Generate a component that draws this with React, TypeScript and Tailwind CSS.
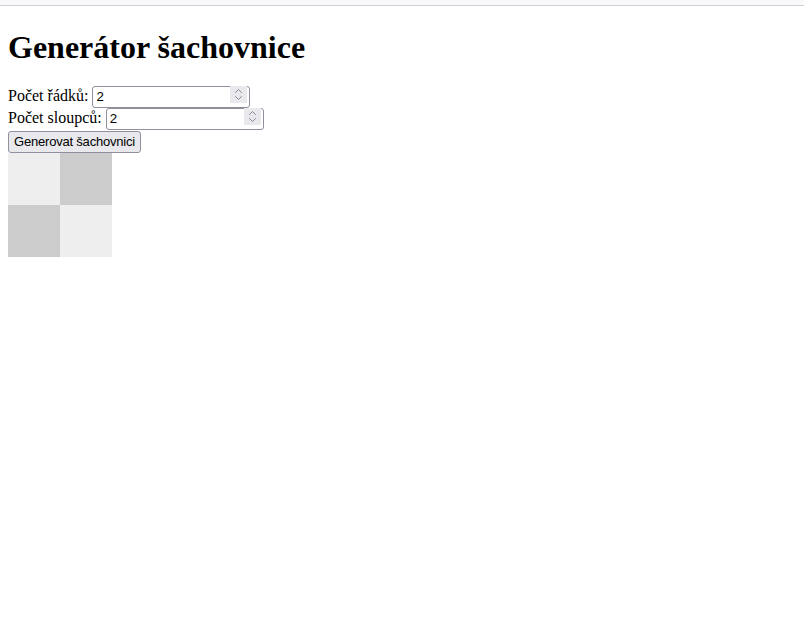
import { useState } from 'react';

const Spinner = () => (
  <div className="absolute right-[3px] top-[2px] flex h-[17px] w-[17px] flex-col items-center justify-center bg-[#e9e9ed]">
    <svg width="9" height="13" viewBox="0 0 9 13" fill="none" stroke="#8a8a94" strokeWidth="1" strokeLinecap="round">
      <path d="M1.5 4.5 L4.5 1.5 L7.5 4.5" />
      <path d="M1.5 8.5 L4.5 11.5 L7.5 8.5" />
    </svg>
  </div>
);

const NumberField = ({ value, onChange }: { value: string; onChange: (v: string) => void }) => (
  <span className="relative inline-block align-middle">
    <input
      type="text"
      value={value}
      onChange={(e) => onChange(e.target.value)}
      className="h-[22px] w-[158px] rounded-[3px] border border-[#8f8f9d] bg-white px-[3px] text-[13.33px] text-black outline-none"
      style={{ fontFamily: '"Liberation Sans", Arial, sans-serif' }}
    />
    <Spinner />
  </span>
);

const App = () => {
  const [rows, setRows] = useState('2');
  const [cols, setCols] = useState('2');
  const [size, setSize] = useState({ r: 2, c: 2 });

  const cells = [];
  for (let r = 0; r < size.r; r++) {
    for (let c = 0; c < size.c; c++) {
      cells.push(
        <div
          key={`${r}-${c}`}
          className={(r + c) % 2 === 0 ? 'h-[52px] w-[52px] bg-[#eeeeee]' : 'h-[52px] w-[52px] bg-[#cccccc]'}
        />
      );
    }
  }

  return (
    <div className="min-h-[630px] bg-white text-black" style={{ fontFamily: '"Liberation Serif", "Times New Roman", serif' }}>
      {/* pruh prohlížeče nahoře */}
      <div className="h-[6px] border-b border-[#cfcfd4] bg-[#f9f9fb]" />

      <div className="px-2">
        <h1 className="pt-[23px] pb-[19px] text-[32px] font-bold leading-[37px]">Generátor šachovnice</h1>

        <div className="flex h-[22px] items-center text-base">
          <label className="mr-[4px]">Počet řádků:</label>
          <NumberField value={rows} onChange={setRows} />
        </div>
        <div className="flex h-[22px] items-center text-base">
          <label className="mr-[4px]">Počet sloupců:</label>
          <NumberField value={cols} onChange={setCols} />
        </div>
        <button
          onClick={() => setSize({ r: parseInt(rows) || 0, c: parseInt(cols) || 0 })}
          className="h-[22px] rounded-[3px] border border-[#8f8f9d] bg-[#e9e9ed] px-[5px] text-[13px] tracking-[-0.2px] text-black"
          style={{ fontFamily: '"Liberation Sans", Arial, sans-serif' }}
        >
          Generovat šachovnici
        </button>

        <div className="grid w-fit" style={{ gridTemplateColumns: `repeat(${size.c}, 52px)` }}>
          {cells}
        </div>
      </div>
    </div>
  );
};

export default App;
